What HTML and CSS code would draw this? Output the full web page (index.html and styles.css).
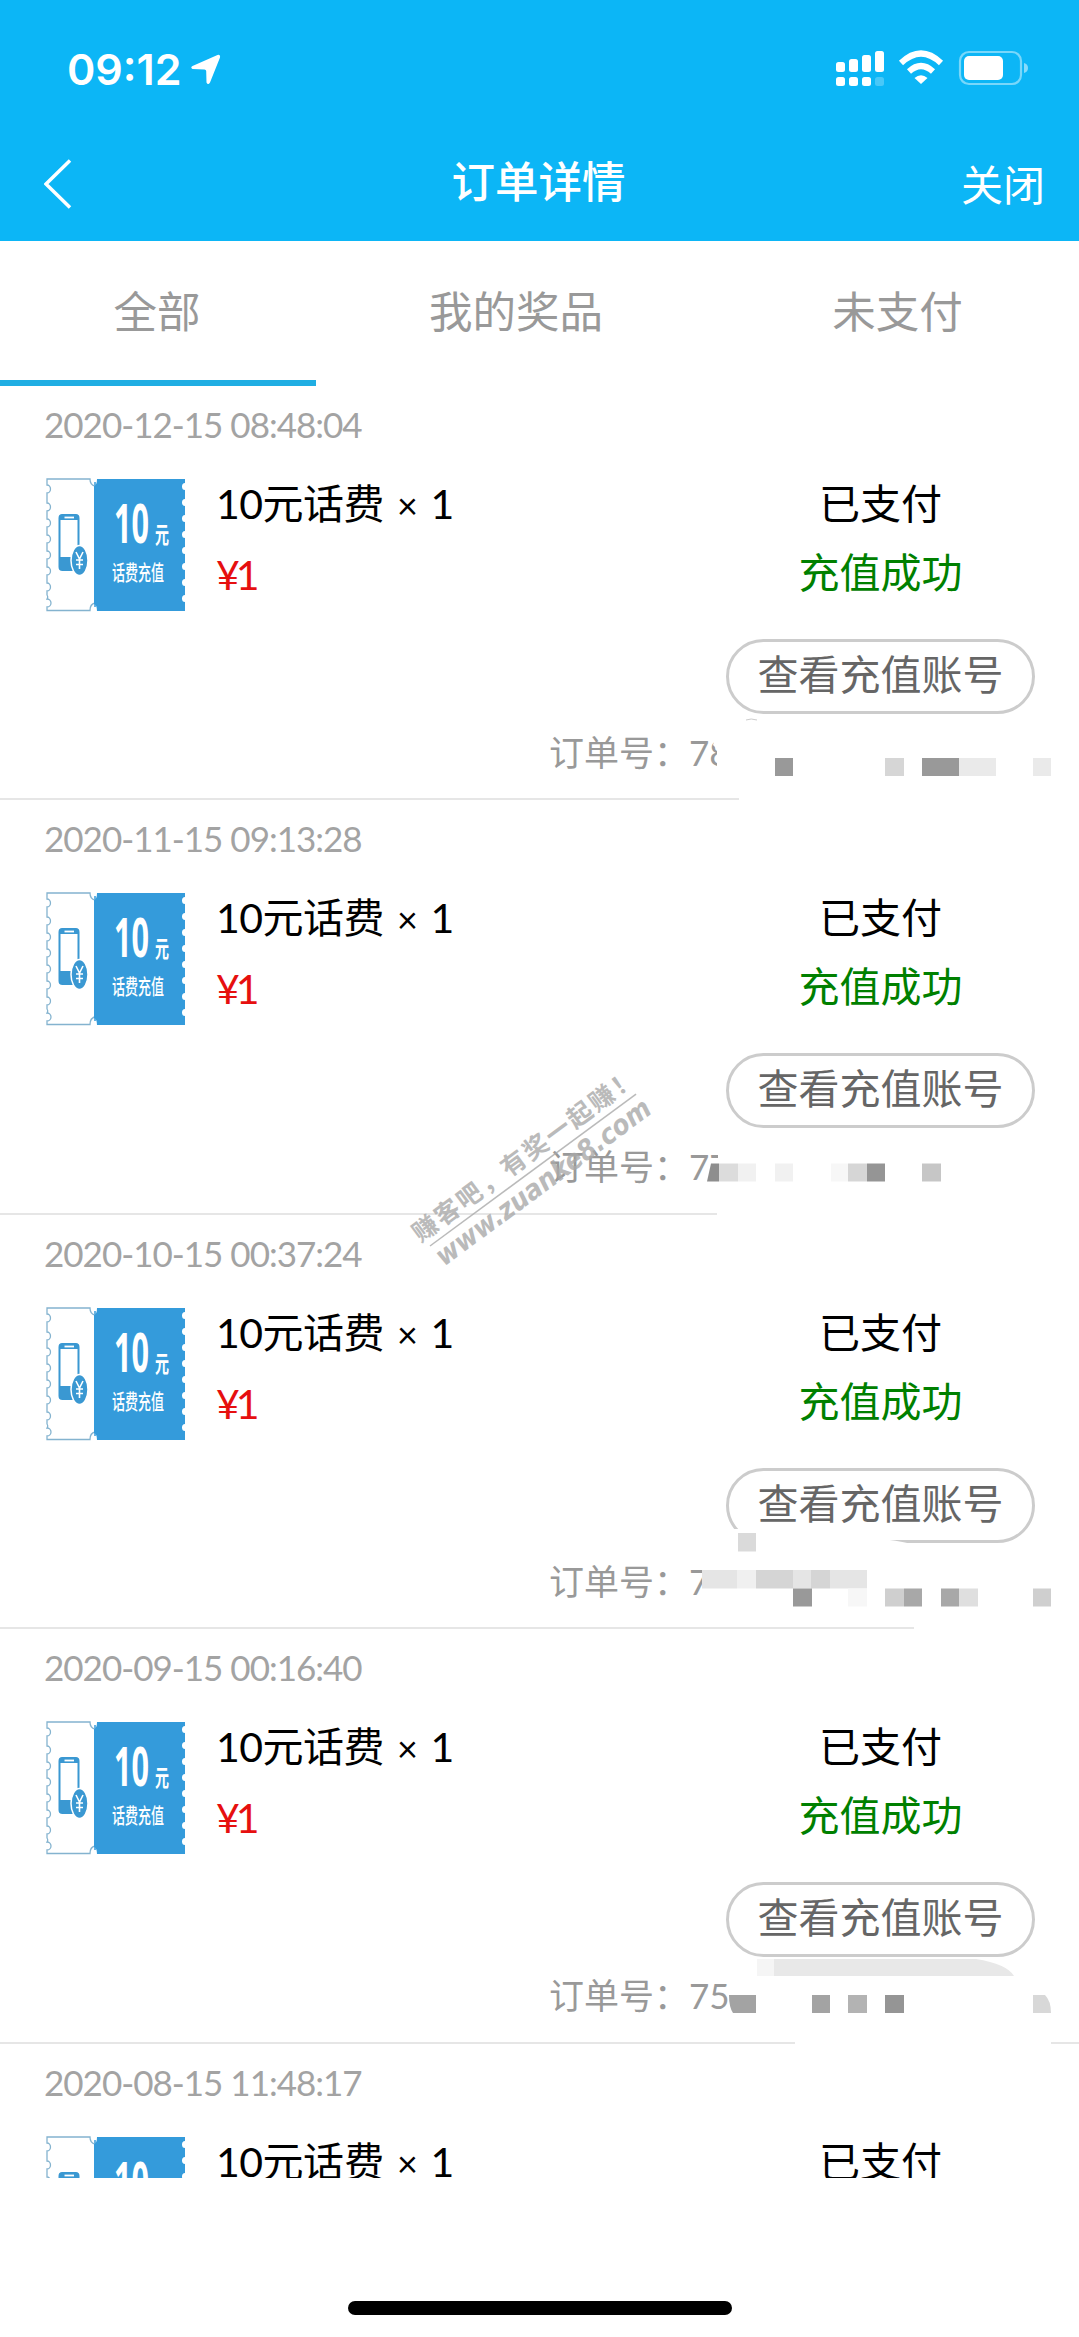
FILE: index.html
```
<!DOCTYPE html>
<html lang="zh-CN">
<head>
  <meta charset="UTF-8">
  <title>订单详情</title>
  <link rel="stylesheet" href="styles.css">
</head>
<body>
  <svg width="0" height="0" class="defs">
    <symbol id="ticket" viewBox="0 0 140 134">
      <path d="M49 4V129" stroke="#349bdb" stroke-width="1.5"/>
      <path d="M1 1H44Q44 7 49 8V125Q44 126 44 132.500H1V129A3.500 3.500 0 0 0 1 121A3.500 3.500 0 0 0 1 117V113A3.500 4 0 0 0 1 105V97A3.500 4 0 0 0 1 89V81A3.500 4 0 0 0 1 73V65A3.500 4 0 0 0 1 57V49A3.500 4 0 0 0 1 41V33A3.500 4 0 0 0 1 25V15A3.500 4 0 0 0 1 7Z" fill="#fff" stroke="#84b3cf" stroke-width="1.300"/>
      <path d="M51 1H139V5A3 3.500 0 0 0 139 12V21A3 3.500 0 0 0 139 28V37A3 3.500 0 0 0 139 44V53A3 3.500 0 0 0 139 60V69A3 3.500 0 0 0 139 76V85A3 3.500 0 0 0 139 92V101A3 3.500 0 0 0 139 108V117A3 3.500 0 0 0 139 124V133H51Q51 127 48 126V8Q51 7 51 1Z" fill="#349bdb"/>
      <rect x="13.500" y="37" width="19" height="55" rx="3" fill="#fff" stroke="#3a98d2" stroke-width="2"/>
      <path d="M13 42V40Q13 36.500 16 36.500H30Q33 36.500 33 40V42Z" fill="#3a98d2"/>
      <path d="M18.500 39.500H28" stroke="#fff" stroke-width="1.800"/>
      <path d="M13 79H33V92H16Q13 92 13 89Z" fill="#3a98d2"/>
      <ellipse cx="33.500" cy="82.500" rx="8.500" ry="15" fill="#3a98d2" stroke="#fff" stroke-width="1.500"/>
      <path d="M30 74L33.500 81L37 74M33.500 81V91M30 82H37M30 86.500H37" fill="none" stroke="#fff" stroke-width="1.600"/>
      <text x="68" y="64.500" class="t-num" textLength="35" lengthAdjust="spacingAndGlyphs">10</text>
      <text x="109" y="64.500" class="t-yuan" textLength="14" lengthAdjust="spacingAndGlyphs">元</text>
      <text x="66" y="102" class="t-label" textLength="52" lengthAdjust="spacingAndGlyphs">话费充值</text>
    </symbol>
  </svg>

  <div class="header">
    <div class="status-bar">
      <span class="time">09:12</span>
      <svg class="location" width="30" height="31" viewBox="0 0 30 31"><path d="M26.500 1Q29.500 0 29 3.500L19 28.500Q17 31.500 15.500 28.500L15.200 17Q15 15.500 13.500 15.500L1.500 15Q-1 13.500 1.500 12Z" fill="#fff"/></svg>
      <svg class="icons" width="194" height="38" viewBox="0 0 194 38">
        <g fill="#fff">
          <rect x="0" y="12" width="9" height="10" rx="2.500"/>
          <rect x="13" y="9" width="9" height="13" rx="2.500"/>
          <rect x="26" y="5" width="9" height="17" rx="2.500"/>
          <rect x="39" y="1" width="9" height="21" rx="2.500"/>
          <rect x="0" y="27" width="9" height="9" rx="2.500"/>
          <rect x="13" y="27" width="9" height="9" rx="2.500"/>
          <rect x="26" y="27" width="9" height="9" rx="2.500"/>
          <rect x="39" y="27" width="9" height="9" rx="2.500" opacity=".25"/>
          <path d="M85 34L78.500 28Q85 22.500 91.500 28Z"/>
        </g>
        <path d="M65 13Q85 -6 105 13M73 21.500Q85 10.500 97 21.500" fill="none" stroke="#fff" stroke-width="6"/>
        <rect x="124" y="2" width="61" height="32" rx="9" fill="none" stroke="#fff" stroke-opacity=".45" stroke-width="2.200"/>
        <rect x="128" y="6" width="39" height="24" rx="5" fill="#fff"/>
        <path d="M188 13Q192 14 192 18T188 23Z" fill="#fff" opacity=".5"/>
      </svg>
    </div>
    <div class="nav">
      <svg class="back" width="28" height="50" viewBox="0 0 28 50"><path d="M26 1.500L2 25L26 48.500" fill="none" stroke="#fff" stroke-width="3.500"/></svg>
      <span class="title">订单详情</span>
      <span class="close">关闭</span>
    </div>
  </div>

  <div class="tabs">
    <div class="tab tab-all active">全部</div>
    <div class="tab tab-prize">我的奖品</div>
    <div class="tab tab-unpaid">未支付</div>
  </div>

  <div class="list">
    <div class="order">
      <div class="date">2020-12-15 08:48:04</div>
      <div class="row">
        <svg class="ticket"><use href="#ticket"/></svg>
        <div class="info">
          <div class="name">10元话费 <span class="times">×</span> 1</div>
          <div class="price">¥1</div>
        </div>
        <div class="state">
          <div>已支付</div>
          <div class="success">充值成功</div>
          <div class="account-btn">查看充值账号</div>
        </div>
      </div>
      <div class="order-no">订单号：78</div>
      <svg class="mask" viewBox="0 0 1079 414">
        <path d="M719 340H1079V415H739V390H717V363L713 359Z" fill="#fff"/>
        <path d="M746 334Q751 332 757 334" stroke="#ccc" fill="none"/>
        <path d="M775 372h18v18h-18zM922 372h37v18h-37z" fill="#999"/>
        <path d="M885 372h19v18h-19z" fill="#d6d6d6"/>
        <path d="M959 372h37v18h-37zM1033 372h18v18h-18z" fill="#eaeaea"/>
      </svg>
    </div>

    <div class="order">
      <div class="date">2020-11-15 09:13:28</div>
      <div class="row">
        <svg class="ticket"><use href="#ticket"/></svg>
        <div class="info">
          <div class="name">10元话费 <span class="times">×</span> 1</div>
          <div class="price">¥1</div>
        </div>
        <div class="state">
          <div>已支付</div>
          <div class="success">充值成功</div>
          <div class="account-btn">查看充值账号</div>
        </div>
      </div>
      <div class="order-no">订单号：77</div>
      <svg class="mask" viewBox="0 0 1079 414">
        <path d="M718 345H1079V415H717V382H706L711 358H718Z" fill="#fff"/>
        <path d="M711 363.500h8v18h-12z" fill="#8e8e8e"/>
        <path d="M719 363.500h19v18h-19z" fill="#dcdcdc"/>
        <path d="M738 363.500h18v18h-18zM775 363.500h18v18h-18z" fill="#f1f1f1"/>
        <path d="M831 363.500h17v18h-17z" fill="#f7f7f7"/>
        <path d="M848 363.500h19v18h-19z" fill="#d6d6d6"/>
        <path d="M867 363.500h18v18h-18z" fill="#959595"/>
        <path d="M922 363.500h19v18h-19z" fill="#c6c6c6"/>
      </svg>
    </div>

    <div class="order">
      <div class="date">2020-10-15 00:37:24</div>
      <div class="row">
        <svg class="ticket"><use href="#ticket"/></svg>
        <div class="info">
          <div class="name">10元话费 <span class="times">×</span> 1</div>
          <div class="price">¥1</div>
        </div>
        <div class="state">
          <div>已支付</div>
          <div class="success">充值成功</div>
          <div class="account-btn">查看充值账号</div>
        </div>
      </div>
      <div class="order-no">订单号：7</div>
      <svg class="mask" viewBox="0 0 1079 414">
        <path d="M730 314H880V324Q895 325 912 329V337H730ZM914 400H1079V415H914Z" fill="#fff"/>
        <path d="M738 318h18v18.500h-18z" fill="#dadada"/>
        <path d="M702 355h35v18.500h-35zM793 355h18v18.500h-18zM830 355h37v18.500h-37z" fill="#e5e5e5"/>
        <path d="M737 355h19v18.500h-19z" fill="#f0f0f0"/>
        <path d="M756 355h37v18.500h-37zM811 355h19v18.500h-19z" fill="#d5d5d5"/>
        <path d="M793 373.500h19v18h-19z" fill="#999"/>
        <path d="M848 373.500h19v18h-19z" fill="#f7f7f7"/>
        <path d="M885 373.500h19v18h-19zM1033 373.500h18v18h-18z" fill="#cfcfcf"/>
        <path d="M904 373.500h18v18h-18zM941 373.500h18v18h-18z" fill="#a8a8a8"/>
        <path d="M959 373.500h19v18h-19z" fill="#dfdfdf"/>
      </svg>
    </div>

    <div class="order">
      <div class="date">2020-09-15 00:16:40</div>
      <div class="row">
        <svg class="ticket"><use href="#ticket"/></svg>
        <div class="info">
          <div class="name">10元话费 <span class="times">×</span> 1</div>
          <div class="price">¥1</div>
        </div>
        <div class="state">
          <div>已支付</div>
          <div class="success">充值成功</div>
          <div class="account-btn">查看充值账号</div>
        </div>
      </div>
      <div class="order-no">订单号：75</div>
      <svg class="mask" viewBox="0 0 1079 414">
        <path d="M795 404H1051V415H795Z" fill="#fff"/>
        <path d="M757 330h17v17h-17z" fill="#f5f5f5"/>
        <path d="M774 330H976Q1007 335 1014 347H774Z" fill="#e8e8e8"/>
        <path d="M729 366h27v18h-23q-4-6-4-18zM812 366h18v18h-18z" fill="#a3a3a3"/>
        <path d="M848 366h19v18h-19z" fill="#b3b3b3"/>
        <path d="M885 366h19v18h-19z" fill="#959595"/>
        <path d="M1033 366h12q6 6 6 18h-18z" fill="#d8d8d8"/>
      </svg>
    </div>

    <div class="order">
      <div class="date">2020-08-15 11:48:17</div>
      <div class="row">
        <svg class="ticket"><use href="#ticket"/></svg>
        <div class="info">
          <div class="name">10元话费 <span class="times">×</span> 1</div>
          <div class="price">¥1</div>
        </div>
        <div class="state">
          <div>已支付</div>
        </div>
      </div>
    </div>
  </div>

  <div class="home-indicator"></div>

  <svg class="watermark" width="290" height="230" viewBox="400 1060 290 230">
    <g transform="translate(430 1246) rotate(-36.400)">
      <path d="M0 0H256" stroke="#aaa" stroke-width="1.500"/>
      <text x="-6" y="-8" class="wm-cn" textLength="272">赚客吧，有奖一起赚！</text>
      <text x="-1" y="25" class="wm-url" textLength="260" lengthAdjust="spacingAndGlyphs">www.zuanke8.com</text>
    </g>
  </svg>
</body>
</html>
```

FILE: styles.css
```
* {
  box-sizing: border-box;
}
body {
  margin: 0;
  height: 2337px;
  overflow: hidden;
  position: relative;
  display: flex;
  flex-direction: column;
  background: #fff;
  color: #000;
  font-family: Lato, "Noto Sans CJK SC", sans-serif;
}
.defs {
  position: absolute;
}
.header {
  height: 241px;
  flex: none;
  background: #0cb6f6;
  color: #fff;
}
.status-bar {
  display: flex;
  align-items: center;
  height: 138px;
  padding: 0 49px 0 67px;
}
.time {
  width: 124px;
  font-family: Inter, sans-serif;
  font-size: 43px;
  font-weight: 600;
}
.icons {
  margin-left: auto;
}
.nav {
  display: flex;
  align-items: center;
  justify-content: space-between;
  height: 92px;
  padding: 0 34px 0 44px;
}
.title {
  margin: -10px 0 0 44px;
  font-size: 43.5px;
  font-weight: 500;
}
.close {
  margin-top: -4px;
  font-size: 42px;
}
.tabs {
  display: flex;
  flex: none;
  height: 145px;
  color: #999;
  font-size: 43.5px;
  line-height: 140px;
  text-align: center;
}
.tab-all {
  width: 316px;
  padding-right: 2px;
}
.tab-prize {
  width: 400px;
}
.tab-unpaid {
  width: 363px;
}
.tab.active {
  border-bottom: 6px solid #20aee3;
}
.list {
  height: 1792px;
  flex: none;
  overflow: hidden;
}
.order {
  position: relative;
  height: 414.4px;
  padding: 12px 44px 0;
  border-bottom: 2px solid #e6e6e6;
}
.date {
  height: 71px;
  color: #a3a3a3;
  font-size: 35px;
  line-height: 52px;
  letter-spacing: -1px;
}
.row {
  display: flex;
  font-size: 41px;
  line-height: 69px;
}
.ticket {
  width: 140px;
  height: 134px;
  margin: 9px 30px 0 2px;
}
.info {
  flex: 1;
}
.name {
  letter-spacing: -0.5px;
}
.times {
  margin: 0 3px;
  font-size: 36px;
}
.price {
  color: #e60f0f;
  letter-spacing: -4px;
}
.state {
  width: 309px;
  text-align: center;
}
.success {
  color: #008000;
}
.account-btn {
  height: 75px;
  margin-top: 32px;
  border: 3px solid #ccc;
  border-radius: 38px;
  color: #666;
  line-height: 65px;
}
.order-no {
  margin: 12px 0 0 505px;
  color: #999;
  font-size: 35px;
  line-height: 52px;
}
/* hides the rest of the order number */
.mask {
  position: absolute;
  left: 0;
  top: 0;
  width: 1079px;
  height: 414px;
  overflow: visible;
}
.home-indicator {
  width: 384px;
  height: 14px;
  margin: 123px auto 0;
  border-radius: 7px;
  background: #000;
}
.t-num,
.t-yuan,
.t-label {
  fill: #fff;
  font-family: "Noto Sans", "Noto Sans CJK SC", sans-serif;
}
.t-num {
  font-size: 54px;
  font-weight: bold;
}
.t-yuan {
  font-size: 23px;
  font-weight: bold;
}
.t-label {
  font-size: 21px;
  font-weight: 500;
}
.watermark {
  position: absolute;
  left: 400px;
  top: 1060px;
  opacity: .8;
}
.wm-cn {
  fill: #a9a9a9;
  font: bold 25px "Noto Sans CJK SC", sans-serif;
}
.wm-url {
  fill: #a9a9a9;
  font: italic bold 28px "DejaVu Sans", sans-serif;
}
```
